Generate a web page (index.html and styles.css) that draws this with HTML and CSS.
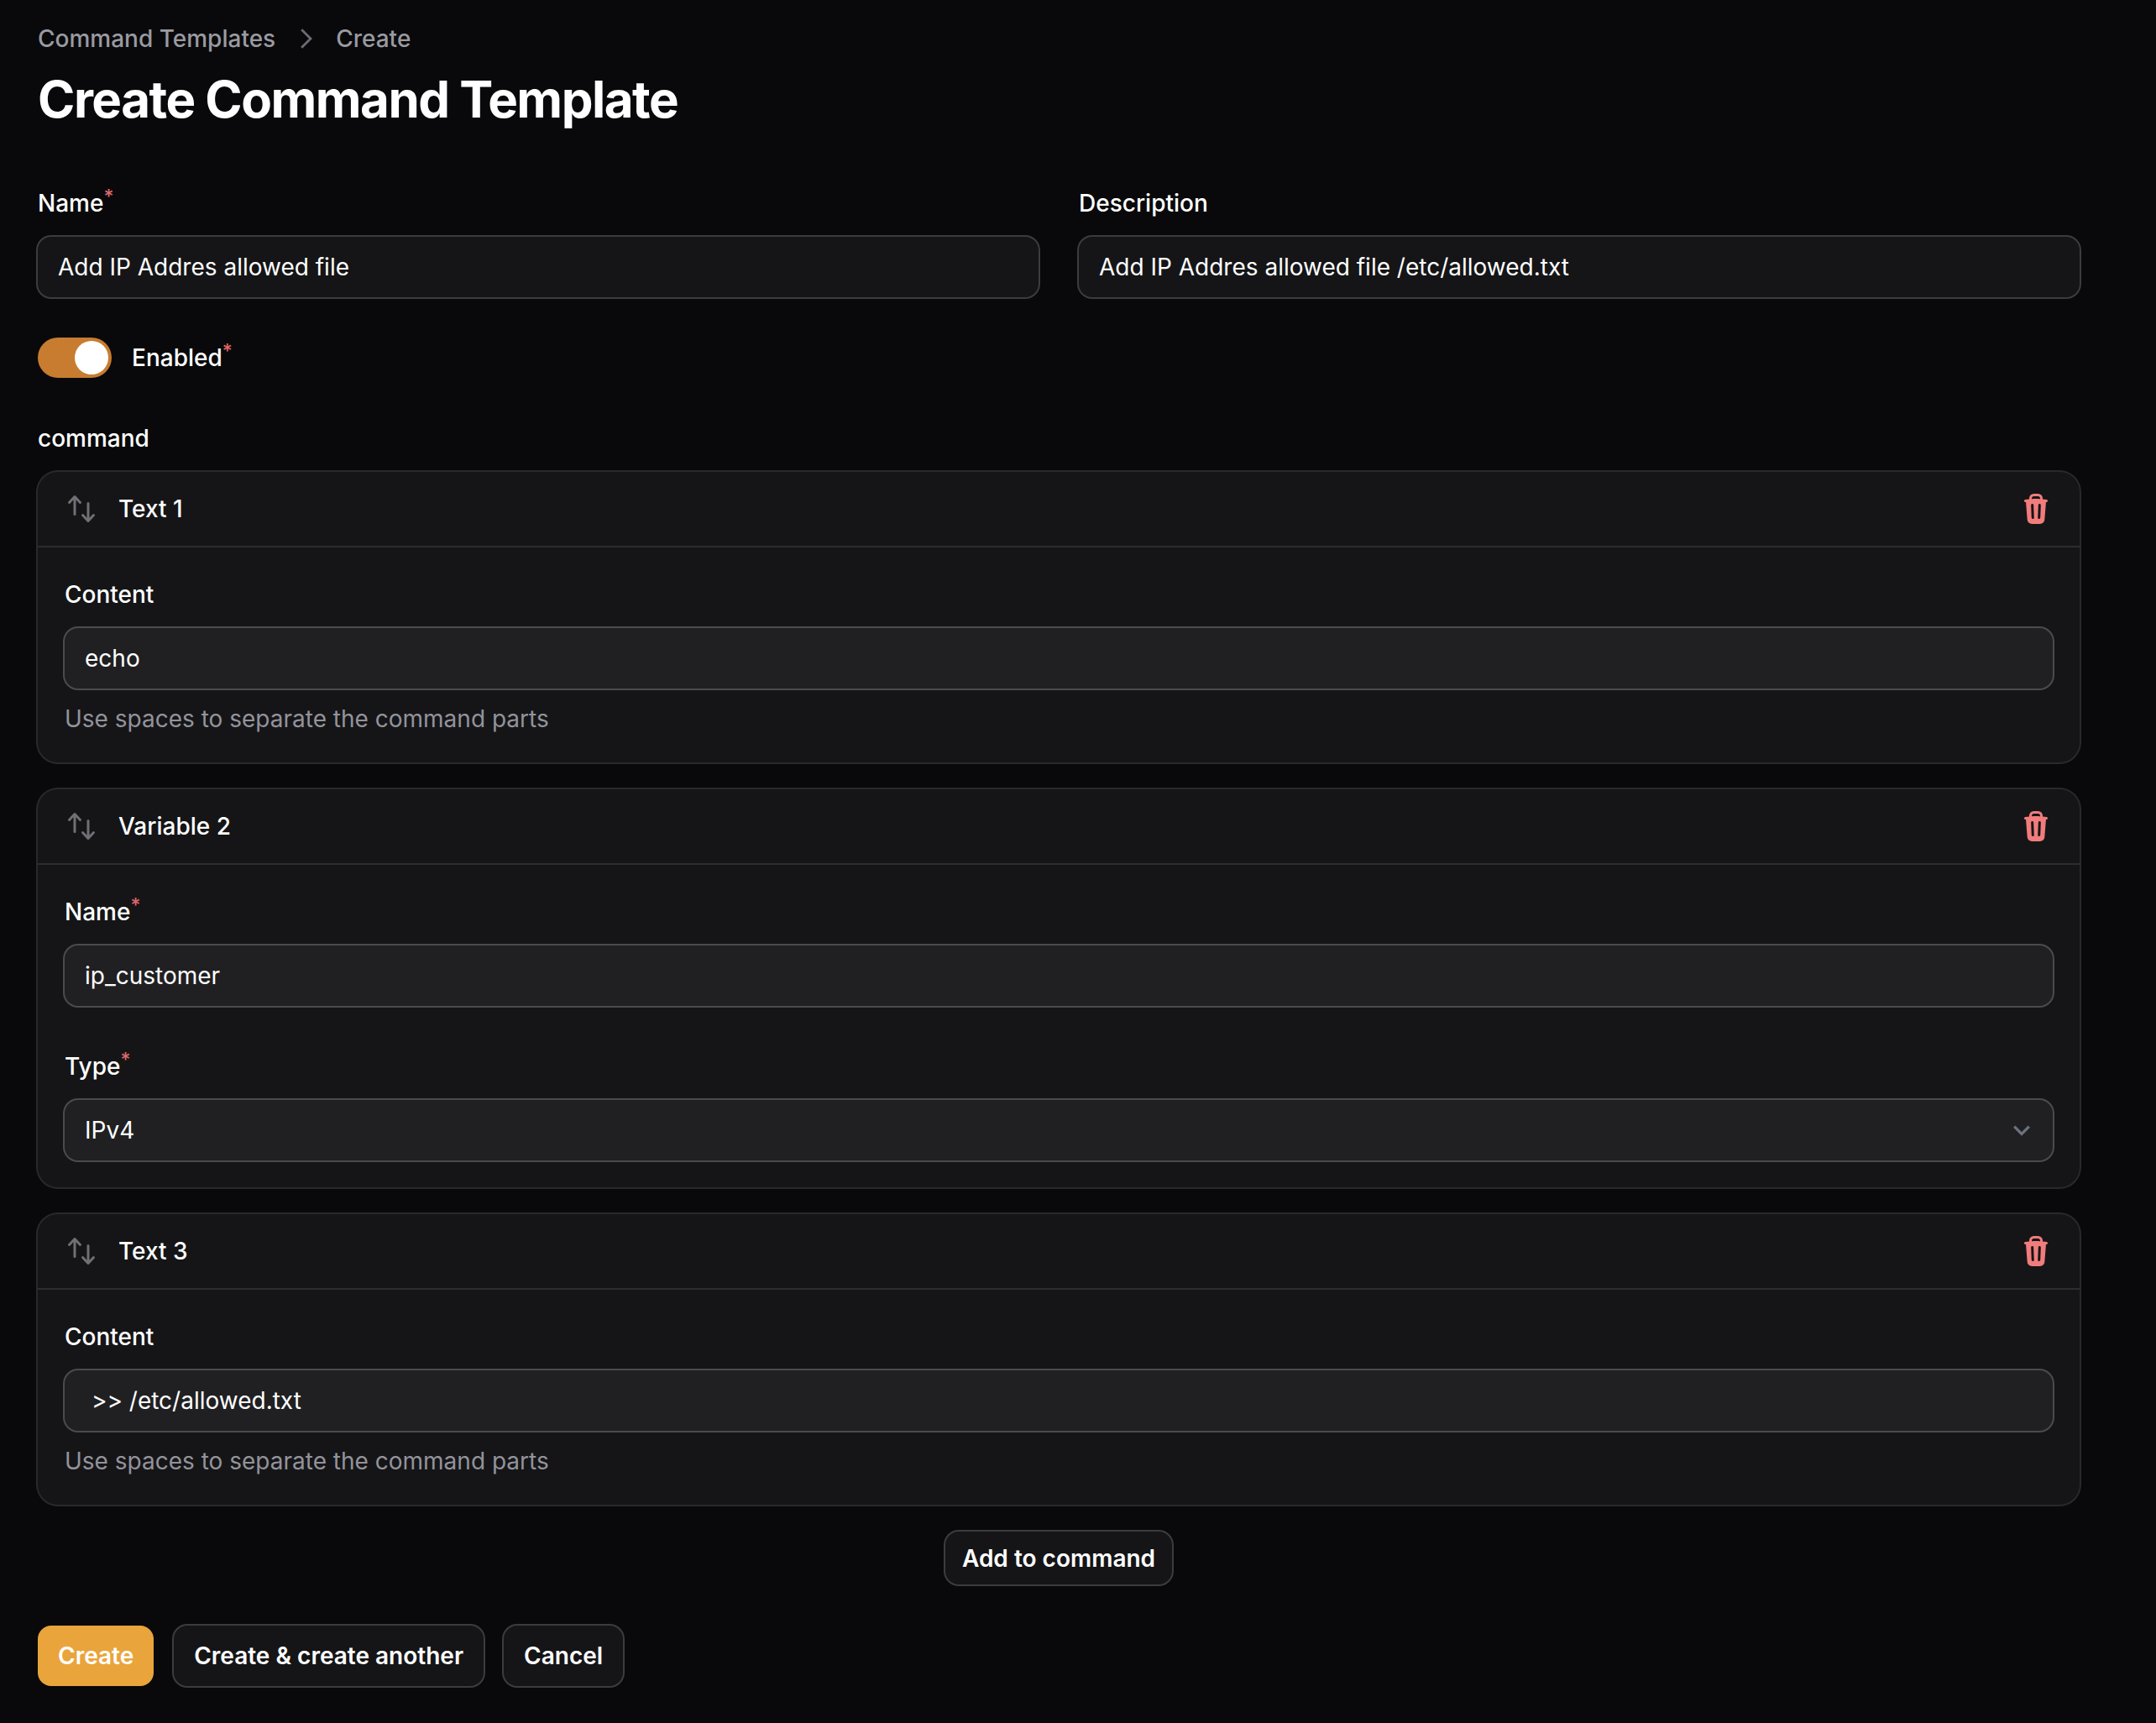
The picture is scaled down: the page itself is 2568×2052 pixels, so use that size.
FILE: index.html
```html
<!DOCTYPE html>
<html lang="en">
<head>
<meta charset="utf-8">
<title>Create Command Template</title>
<link rel="stylesheet" href="styles.css">
</head>
<body>
<main class="page">
  <nav class="crumbs">
    <a>Command Templates</a>
    <svg class="crumb-sep" viewBox="0 0 20 20"><path d="M7.6 4.6 13 10l-5.4 5.4"/></svg>
    <a>Create</a>
  </nav>
  <h1 class="title">Create Command Template</h1>

  <form class="form">
    <div class="cols">
      <div class="field">
        <label class="label">Name<sup class="req">*</sup></label>
        <input class="input" value="Add IP Addres allowed file">
      </div>
      <div class="field">
        <label class="label">Description</label>
        <input class="input" value="Add IP Addres allowed file /etc/allowed.txt">
      </div>
    </div>

    <div class="toggle-row">
      <span class="toggle"><span class="knob"></span></span>
      <label class="label">Enabled<sup class="req">*</sup></label>
    </div>

    <section class="builder">
      <label class="label">command</label>
      <div class="cards">
        <article class="card">
          <header class="card-head">
            <svg class="icon handle" viewBox="0 0 20 20"><path d="M2.24 6.8a.75.75 0 0 0 1.06-.04l1.95-2.1v8.59a.75.75 0 0 0 1.5 0V4.66l1.95 2.1a.75.75 0 1 0 1.1-1.02l-3.25-3.5a.75.75 0 0 0-1.1 0L2.2 5.74a.75.75 0 0 0 .04 1.06Zm8 6.4a.75.75 0 0 0-.04 1.06l3.25 3.5a.75.75 0 0 0 1.1 0l3.25-3.5a.75.75 0 1 0-1.1-1.02l-1.95 2.1V6.75a.75.75 0 0 0-1.5 0v8.59l-1.95-2.1a.75.75 0 0 0-1.06-.04Z"/></svg>
            <h2 class="card-title">Text 1</h2>
            <svg class="icon trash" viewBox="0 0 20 20"><path fill-rule="evenodd" d="M8.75 1A2.75 2.75 0 0 0 6 3.75v.443c-.795.077-1.584.176-2.365.298a.75.75 0 1 0 .23 1.482l.149-.022.841 10.518A2.75 2.75 0 0 0 7.596 19h4.807a2.75 2.75 0 0 0 2.742-2.53l.841-10.52.149.023a.75.75 0 0 0 .23-1.482A41.03 41.03 0 0 0 14 4.193V3.75A2.75 2.75 0 0 0 11.25 1h-2.5ZM10 4c.84 0 1.673.025 2.5.075V3.75c0-.69-.56-1.25-1.25-1.25h-2.5c-.69 0-1.25.56-1.25 1.25v.325C8.327 4.025 9.16 4 10 4ZM8.58 7.72a.75.75 0 0 0-1.5.06l.3 7.5a.75.75 0 1 0 1.5-.06l-.3-7.5Zm4.34.06a.75.75 0 1 0-1.5-.06l-.3 7.5a.75.75 0 1 0 1.5.06l.3-7.5Z"/></svg>
          </header>
          <div class="card-body">
            <div class="field">
              <label class="label">Content</label>
              <input class="input inner" value="echo">
              <p class="help">Use spaces to separate the command parts</p>
            </div>
          </div>
        </article>

        <article class="card">
          <header class="card-head">
            <svg class="icon handle" viewBox="0 0 20 20"><path d="M2.24 6.8a.75.75 0 0 0 1.06-.04l1.95-2.1v8.59a.75.75 0 0 0 1.5 0V4.66l1.95 2.1a.75.75 0 1 0 1.1-1.02l-3.25-3.5a.75.75 0 0 0-1.1 0L2.2 5.74a.75.75 0 0 0 .04 1.06Zm8 6.4a.75.75 0 0 0-.04 1.06l3.25 3.5a.75.75 0 0 0 1.1 0l3.25-3.5a.75.75 0 1 0-1.1-1.02l-1.95 2.1V6.75a.75.75 0 0 0-1.5 0v8.59l-1.95-2.1a.75.75 0 0 0-1.06-.04Z"/></svg>
            <h2 class="card-title">Variable 2</h2>
            <svg class="icon trash" viewBox="0 0 20 20"><path fill-rule="evenodd" d="M8.75 1A2.75 2.75 0 0 0 6 3.75v.443c-.795.077-1.584.176-2.365.298a.75.75 0 1 0 .23 1.482l.149-.022.841 10.518A2.75 2.75 0 0 0 7.596 19h4.807a2.75 2.75 0 0 0 2.742-2.53l.841-10.52.149.023a.75.75 0 0 0 .23-1.482A41.03 41.03 0 0 0 14 4.193V3.75A2.75 2.75 0 0 0 11.25 1h-2.5ZM10 4c.84 0 1.673.025 2.5.075V3.75c0-.69-.56-1.25-1.25-1.25h-2.5c-.69 0-1.25.56-1.25 1.25v.325C8.327 4.025 9.16 4 10 4ZM8.58 7.72a.75.75 0 0 0-1.5.06l.3 7.5a.75.75 0 1 0 1.5-.06l-.3-7.5Zm4.34.06a.75.75 0 1 0-1.5-.06l-.3 7.5a.75.75 0 1 0 1.5.06l.3-7.5Z"/></svg>
          </header>
          <div class="card-body stack">
            <div class="field">
              <label class="label">Name<sup class="req">*</sup></label>
              <input class="input inner" value="ip_customer">
            </div>
            <div class="field">
              <label class="label">Type<sup class="req">*</sup></label>
              <div class="input inner select">
                <span>IPv4</span>
                <svg class="icon caret" viewBox="0 0 20 20"><path d="m6 8 4 4 4-4"/></svg>
              </div>
            </div>
          </div>
        </article>

        <article class="card">
          <header class="card-head">
            <svg class="icon handle" viewBox="0 0 20 20"><path d="M2.24 6.8a.75.75 0 0 0 1.06-.04l1.95-2.1v8.59a.75.75 0 0 0 1.5 0V4.66l1.95 2.1a.75.75 0 1 0 1.1-1.02l-3.25-3.5a.75.75 0 0 0-1.1 0L2.2 5.74a.75.75 0 0 0 .04 1.06Zm8 6.4a.75.75 0 0 0-.04 1.06l3.25 3.5a.75.75 0 0 0 1.1 0l3.25-3.5a.75.75 0 1 0-1.1-1.02l-1.95 2.1V6.75a.75.75 0 0 0-1.5 0v8.59l-1.95-2.1a.75.75 0 0 0-1.06-.04Z"/></svg>
            <h2 class="card-title">Text 3</h2>
            <svg class="icon trash" viewBox="0 0 20 20"><path fill-rule="evenodd" d="M8.75 1A2.75 2.75 0 0 0 6 3.75v.443c-.795.077-1.584.176-2.365.298a.75.75 0 1 0 .23 1.482l.149-.022.841 10.518A2.75 2.75 0 0 0 7.596 19h4.807a2.75 2.75 0 0 0 2.742-2.53l.841-10.52.149.023a.75.75 0 0 0 .23-1.482A41.03 41.03 0 0 0 14 4.193V3.75A2.75 2.75 0 0 0 11.25 1h-2.5ZM10 4c.84 0 1.673.025 2.5.075V3.75c0-.69-.56-1.25-1.25-1.25h-2.5c-.69 0-1.25.56-1.25 1.25v.325C8.327 4.025 9.16 4 10 4ZM8.58 7.72a.75.75 0 0 0-1.5.06l.3 7.5a.75.75 0 1 0 1.5-.06l-.3-7.5Zm4.34.06a.75.75 0 1 0-1.5-.06l-.3 7.5a.75.75 0 1 0 1.5.06l.3-7.5Z"/></svg>
          </header>
          <div class="card-body">
            <div class="field">
              <label class="label">Content</label>
              <input class="input inner" value=" >> /etc/allowed.txt">
              <p class="help">Use spaces to separate the command parts</p>
            </div>
          </div>
        </article>
      </div>
      <div class="add-row">
        <button type="button" class="btn add">Add to command</button>
      </div>
    </section>

    <div class="actions">
      <button type="button" class="btn primary">Create</button>
      <button type="button" class="btn">Create &amp; create another</button>
      <button type="button" class="btn">Cancel</button>
    </div>
  </form>
</main>
</body>
</html>
```
FILE: styles.css
```css
* { box-sizing: border-box; }

html, body {
  margin: 0;
  background: #09090b;
}

body {
  min-height: 2052px;
  color: #fff;
  font-family: Inter, "Liberation Sans", sans-serif;
  font-size: 28px;
  line-height: 40px;
}

.page {
  padding: 26px 91px 0 45px;
}

.crumbs {
  display: flex;
  align-items: center;
  gap: 16px;
  height: 40px;
  color: #9a9aa1;
  font-weight: 500;
}

.crumb-sep {
  width: 40px;
  height: 40px;
  fill: none;
  stroke: #6b6b72;
  stroke-width: 1.4;
}

.title {
  margin: 16px 0 0;
  font-size: 60px;
  line-height: 72px;
  font-weight: 700;
  letter-spacing: -1.5px;
}

.form {
  margin-top: 68px;
}

.cols {
  display: grid;
  grid-template-columns: 1fr 1fr;
  gap: 48px;
}

.field {
  display: flex;
  flex-direction: column;
  gap: 20px;
}

.label {
  display: block;
  font-weight: 500;
  color: #fff;
}

.req {
  color: #e0686a;
  font-size: 23px;
  line-height: 0;
  vertical-align: 10px;
}

.input {
  display: block;
  width: 100%;
  height: 72px;
  padding: 0 24px;
  border: 0;
  border-radius: 16px;
  background: #151517;
  box-shadow: 0 0 0 2px #3c3c3f;
  color: #fff;
  font: inherit;
  outline: 0;
}

.input.inner {
  background: #202022;
  box-shadow: 0 0 0 2px #4b4b4e;
}

.select {
  display: flex;
  align-items: center;
  justify-content: space-between;
  padding-right: 15px;
}

.toggle-row {
  display: flex;
  align-items: center;
  gap: 24px;
  margin-top: 48px;
}

.toggle {
  display: flex;
  align-items: center;
  justify-content: flex-end;
  width: 88px;
  height: 48px;
  padding-right: 4px;
  border-radius: 24px;
  background: #c77c30;
}

.knob {
  width: 40px;
  height: 40px;
  border-radius: 50%;
  background: #fff;
}

.builder {
  margin-top: 52px;
}

.cards {
  display: flex;
  flex-direction: column;
  gap: 32px;
  margin-top: 20px;
}

.card {
  border-radius: 24px;
  background: #151517;
  box-shadow: 0 0 0 2px #29292c;
}

.card-head {
  display: flex;
  align-items: center;
  gap: 24px;
  height: 90px;
  padding: 0 32px;
  border-bottom: 2px solid #2d2d30;
}

.icon {
  flex: none;
  width: 40px;
  height: 40px;
}

.handle { fill: #6f6f76; }
.trash { fill: #f07c7c; }

.caret {
  width: 44px;
  height: 44px;
  fill: none;
  stroke: #6b7280;
  stroke-width: 1.5;
}

.card-title {
  flex: 1;
  margin: 0;
  font-size: 28px;
  font-weight: 500;
  line-height: 40px;
}

.card-body {
  padding: 36px 32px 32px;
}

.stack {
  display: flex;
  flex-direction: column;
  gap: 52px;
}

.help {
  margin: -4px 0 0;
  color: #93939b;
}

.add-row {
  display: flex;
  justify-content: center;
  margin-top: 32px;
}

.btn {
  height: 72px;
  padding: 0 24px;
  border: 0;
  border-radius: 16px;
  background: #151517;
  box-shadow: 0 0 0 2px #3c3c3f;
  color: #fff;
  font: inherit;
  font-weight: 600;
  white-space: nowrap;
}

.btn.add {
  height: 63px;
  padding: 0 20px;
}

.btn.primary {
  background: #eaa43c;
  box-shadow: none;
}

.actions {
  display: flex;
  gap: 24px;
  margin-top: 49px;
}
```
